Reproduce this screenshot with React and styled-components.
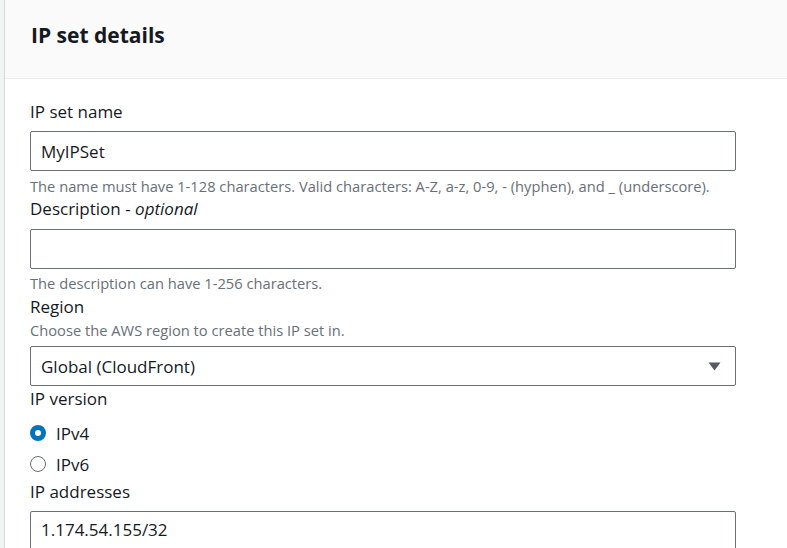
import React from "react";
import styled, { createGlobalStyle } from "styled-components";

const Global = createGlobalStyle`
  html, body { margin: 0; padding: 0; overflow: hidden; }
  body {
    background: #f2f3f3;
    font-family: "Open Sans", "Noto Sans", sans-serif;
    color: #16191f;
  }
  * { box-sizing: border-box; }
`;

const Page = styled.div`
  padding-left: 4px;
  width: 820px;
`;

const Panel = styled.section`
  background: #ffffff;
  border-left: 1px solid #d5dbdb;
  min-height: 600px;
`;

const Header = styled.header`
  height: 79px;
  background: #fafafa;
  border-bottom: 1px solid #eaeded;
  padding: 22px 0 0 26px;
`;

const Title = styled.h2`
  margin: 0;
  font-size: 21px;
  font-weight: 700;
  line-height: 26px;
  color: #16191f;
`;

const Body = styled.div`
  padding: 22px 0 0 25px;
  width: 731px;
  display: flex;
  flex-direction: column;
`;

const Field = styled.div`
  display: flex;
  flex-direction: column;
  margin-bottom: ${(p) => p.$after ?? 3}px;
`;

const Label = styled.label`
  font-size: 17px;
  line-height: 22px;
  color: #16191f;
  em { font-style: italic; }
`;

const Description = styled.div`
  margin-top: 3px;
  font-size: 14.7px;
  line-height: 18px;
  color: #687078;
`;

const Hint = styled.div`
  margin-top: ${(p) => p.$top ?? 6}px;
  font-size: 14.7px;
  line-height: 18px;
  color: #687078;
`;

const Input = styled.input`
  margin-top: ${(p) => p.$top ?? 8}px;
  width: 100%;
  height: 40px;
  border: 1px solid #687078;
  border-radius: 2px;
  padding: 0 10px;
  font-family: inherit;
  font-size: 17px;
  color: #16191f;
  background: #fff;
  outline: none;
`;

const TextArea = styled.textarea`
  margin-top: 8px;
  width: 100%;
  height: 90px;
  border: 1px solid #687078;
  border-radius: 2px;
  padding: 7px 10px;
  font-family: inherit;
  font-size: 17px;
  line-height: 22px;
  color: #16191f;
  background: #fff;
  resize: none;
  outline: none;
`;

const Select = styled.div`
  margin-top: 7px;
  height: 40px;
  border: 1px solid #687078;
  border-radius: 2px;
  padding: 0 14px 0 10px;
  display: flex;
  align-items: center;
  justify-content: space-between;
  font-size: 17px;
  color: #16191f;
`;

const RadioGroup = styled.div`
  margin-top: 11px;
  display: flex;
  flex-direction: column;
  gap: 7px;
`;

const RadioRow = styled.label`
  display: flex;
  align-items: center;
  gap: 10px;
  height: 24px;
  font-size: 17px;
  color: #16191f;
`;

const RadioDot = styled.span`
  width: 16px;
  height: 16px;
  border-radius: 50%;
  background: #fff;
  border: ${(p) => (p.$checked ? "5px solid #0073bb" : "1.5px solid #687078")};
`;

const Arrow = () => (
  <svg width="13" height="9" viewBox="0 0 13 9">
    <path d="M0.5 0.5 H12.5 L6.5 8.5 Z" fill="#545b64" />
  </svg>
);

export default function App() {
  return (
    <>
      <Global />
      <Page>
        <Panel>
          <Header>
            <Title>IP set details</Title>
          </Header>
          <Body>
            <Field>
              <Label>IP set name</Label>
              <Input defaultValue="MyIPSet" />
              <Hint>
                The name must have 1-128 characters. Valid characters: A-Z, a-z, 0-9, - (hyphen), and _ (underscore).
              </Hint>
            </Field>
            <Field $after={4}>
              <Label>
                Description - <em>optional</em>
              </Label>
              <Input $top={9} />
              <Hint $top={5}>The description can have 1-256 characters.</Hint>
            </Field>
            <Field $after={2}>
              <Label>Region</Label>
              <Description>Choose the AWS region to create this IP set in.</Description>
              <Select>
                <span>Global (CloudFront)</span>
                <Arrow />
              </Select>
            </Field>
            <Field $after={5}>
              <Label>IP version</Label>
              <RadioGroup>
                <RadioRow>
                  <RadioDot $checked />
                  IPv4
                </RadioRow>
                <RadioRow>
                  <RadioDot />
                  IPv6
                </RadioRow>
              </RadioGroup>
            </Field>
            <Field>
              <Label>IP addresses</Label>
              <TextArea defaultValue="1.174.54.155/32" />
            </Field>
          </Body>
        </Panel>
      </Page>
    </>
  );
}
